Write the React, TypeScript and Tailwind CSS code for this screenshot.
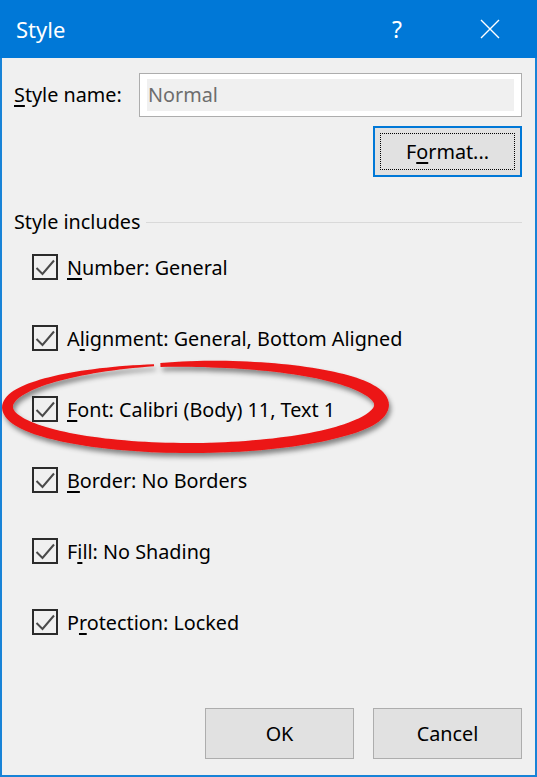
import React from 'react'

const items: { label: string; key: string; rest: string; pre?: string }[] = [
  { pre: '', key: 'N', rest: 'umber: General', label: 'number' },
  { pre: 'A', key: 'l', rest: 'ignment: General, Bottom Aligned', label: 'alignment' },
  { pre: '', key: 'F', rest: 'ont: Calibri (Body) 11, Text 1', label: 'font' },
  { pre: '', key: 'B', rest: 'order: No Borders', label: 'border' },
  { pre: 'F', key: 'i', rest: 'll: No Shading', label: 'fill' },
  { pre: 'P', key: 'r', rest: 'otection: Locked', label: 'protection' },
]

// hand-drawn looking red ring around the Font row
function ringPath() {
  const cx = 194.5
  const cy = 406
  const rx = 187
  const ry = 42
  const stops: [number, number][] = [
    [0, 2],
    [0.1, 6],
    [0.216, 11],
    [0.35, 10],
    [0.467, 10],
    [0.6, 11],
    [0.72, 15],
    [0.85, 10],
    [0.95, 7],
    [1, 4],
  ]
  const thick = (s: number) => {
    for (let i = 1; i < stops.length; i++) {
      const [s0, t0] = stops[i - 1]
      const [s1, t1] = stops[i]
      if (s <= s1) return t0 + ((s - s0) / (s1 - s0)) * (t1 - t0)
    }
    return 4
  }
  const start = (-102.5 * Math.PI) / 180
  const sweep = (358 * Math.PI) / 180
  const n = 160
  const outer: string[] = []
  const inner: string[] = []
  for (let i = 0; i <= n; i++) {
    const s = i / n
    const th = start - s * sweep
    const c = Math.cos(th)
    const si = Math.sin(th)
    const x = cx + rx * c
    const y = cy + ry * si - 0.006 * (x - cx)
    let nx = c / rx
    let ny = si / ry
    const len = Math.hypot(nx, ny)
    nx /= len
    ny /= len
    const h = thick(s) / 2
    outer.push(`${(x + nx * h).toFixed(2)},${(y + ny * h).toFixed(2)}`)
    inner.push(`${(x - nx * h).toFixed(2)},${(y - ny * h).toFixed(2)}`)
  }
  return 'M' + outer.join(' L') + ' L' + inner.reverse().join(' L') + ' Z'
}

function CheckBox() {
  return (
    <div className="h-[26px] w-[26px] shrink-0 border-2 border-[#2b2b2b] bg-[#f0f0f0]">
      <svg width="22" height="22" viewBox="0 0 22 22">
        <polyline points="2.5,12 8.5,18 20,4.5" fill="none" stroke="#4a4a4a" strokeWidth="2" />
      </svg>
    </div>
  )
}

export default function App() {
  return (
    <div className="relative flex h-[777px] w-[537px] flex-col font-['Noto_Sans',sans-serif] text-[19.8px] text-black">
      <div className="flex h-[58px] shrink-0 items-center bg-[#0078d7] text-white">
        <span className="pl-[16px] text-[22px]">Style</span>
        <span className="ml-auto w-[20px] text-center text-[23px]">?</span>
        <div className="ml-[73px] mr-[37px] flex h-[20px] w-[20px] items-center justify-center">
          <svg width="20" height="20" viewBox="0 0 20 20">
            <path d="M1 1 L19 19 M19 1 L1 19" stroke="#ffffff" strokeWidth="1.4" />
          </svg>
        </div>
      </div>

      <div className="flex flex-1 flex-col border-x-2 border-b-2 border-[#1883d7] bg-[#f0f0f0] pl-[12px] pr-[13px]">
        <div className="mt-[15px] flex h-[44px] items-center">
          <label className="w-[125px] shrink-0">
            <span className="underline decoration-[1.5px] underline-offset-[3px]">S</span>tyle name:
          </label>
          <div className="flex h-full flex-1 border border-[#adadad] bg-white px-[7px] py-[5px]">
            <div className="flex flex-1 items-center bg-[#f0f0f0] pl-[1px] text-[#6d6d6d]">Normal</div>
          </div>
        </div>

        <button className="mt-[9px] flex h-[51px] w-[149px] self-end border-2 border-[#0078d7] bg-[#e1e1e1] p-[5px]">
          <span className="flex flex-1 items-center justify-center border border-dotted border-black">
            F<span className="underline decoration-[1.5px] underline-offset-[3px]">o</span>rmat...
          </span>
        </button>

        <div className="mt-[33px] flex h-[24px] items-center">
          <span>Style includes</span>
          <div className="ml-[6px] h-px flex-1 bg-[#d9d9d9]" />
        </div>

        <div className="mt-[20px] flex flex-col gap-[45px]">
          {items.map((it) => (
            <div key={it.label} className="flex h-[26px] items-center pl-[18px]">
              <CheckBox />
              <span className="ml-[9px] mt-[2px] whitespace-nowrap">
                {it.pre}
                <span className="underline decoration-[1.5px] underline-offset-[3px]">{it.key}</span>
                {it.rest}
              </span>
            </div>
          ))}
        </div>

        <div className="mt-auto mb-[16px] flex justify-end gap-[19px]">
          <button className="h-[51px] w-[149px] border border-[#adadad] bg-[#e1e1e1]">OK</button>
          <button className="h-[51px] w-[149px] border border-[#adadad] bg-[#e1e1e1]">Cancel</button>
        </div>
      </div>

      <svg
        className="pointer-events-none absolute left-0 top-0"
        width="537"
        height="777"
        viewBox="0 0 537 777"
      >
        <defs>
          <filter id="ringShadow" x="-10%" y="-30%" width="120%" height="160%">
            <feDropShadow dx="2" dy="4" stdDeviation="2.5" floodColor="#000000" floodOpacity="0.45" />
          </filter>
        </defs>
        <path d={ringPath()} fill="#ec1515" filter="url(#ringShadow)" />
      </svg>
    </div>
  )
}
